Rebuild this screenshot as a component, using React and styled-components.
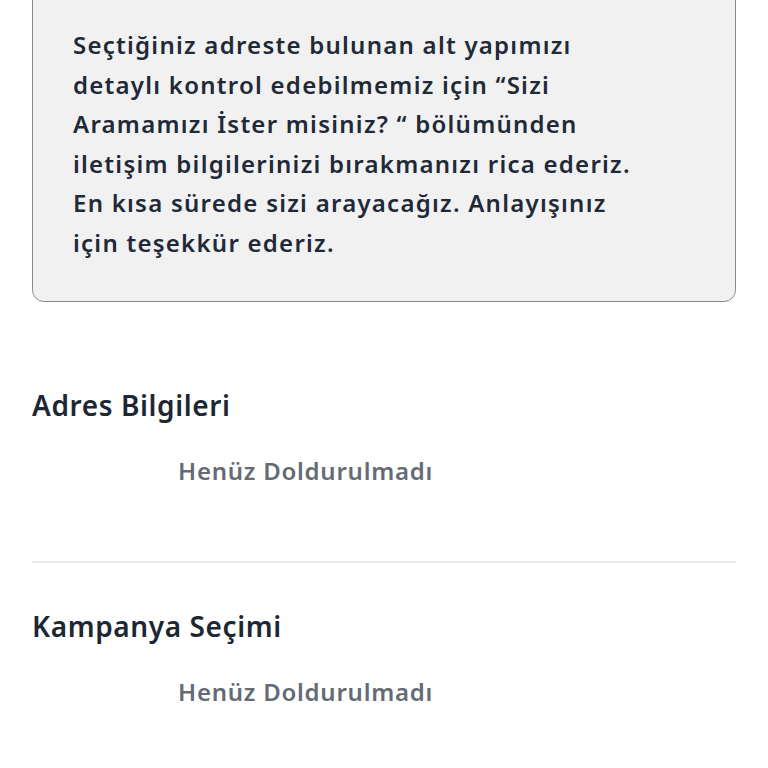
import styled, { createGlobalStyle } from "styled-components";

const GlobalStyle = createGlobalStyle`
  body {
    margin: 0;
    background: #ffffff;
    font-family: "Noto Sans", "Open Sans", sans-serif;
    overflow: hidden;
  }
`;

const Page = styled.div`
  width: 768px;
  padding: 0 32px;
  box-sizing: border-box;
`;

const InfoBox = styled.div`
  margin-top: -20px;
  padding: 44px 40px 38px 40px;
  background: #f1f1f1;
  border: 1.5px solid #8a8a8a;
  border-radius: 12px;
  color: #1f2937;
  font-size: 24px;
  font-weight: 600;
  letter-spacing: 1.25px;
  line-height: 39.6px;
`;

const Section = styled.section`
  padding: ${(p) => p.$pad};
  border-bottom: ${(p) => (p.$divider ? "2px solid #ececec" : "none")};
`;

const Title = styled.h2`
  margin: 0;
  font-size: 28px;
  font-weight: 600;
  letter-spacing: 0.6px;
  line-height: 34px;
  color: #1d2733;
`;

const Empty = styled.div`
  margin: 33px 0 0 146px;
  font-size: 24px;
  font-weight: 600;
  letter-spacing: 0.75px;
  line-height: 32px;
  color: #656b74;
`;

const sections = [
  { title: "Adres Bilgileri", pad: "86px 0 74px 0", divider: true },
  { title: "Kampanya Seçimi", pad: "46px 0 40px 0", divider: false },
];

const App = () => {
  return (
    <>
      <GlobalStyle />
      <Page>
        <InfoBox>
          Seçtiğiniz adreste bulunan alt yapımızı
          <br />
          detaylı kontrol edebilmemiz için “Sizi
          <br />
          Aramamızı İster misiniz? “ bölümünden
          <br />
          iletişim bilgilerinizi bırakmanızı rica ederiz.
          <br />
          En kısa sürede sizi arayacağız. Anlayışınız
          <br />
          için teşekkür ederiz.
        </InfoBox>
        {sections.map((s) => (
          <Section key={s.title} $pad={s.pad} $divider={s.divider}>
            <Title>{s.title}</Title>
            <Empty>Henüz Doldurulmadı</Empty>
          </Section>
        ))}
      </Page>
    </>
  );
};

export default App;
